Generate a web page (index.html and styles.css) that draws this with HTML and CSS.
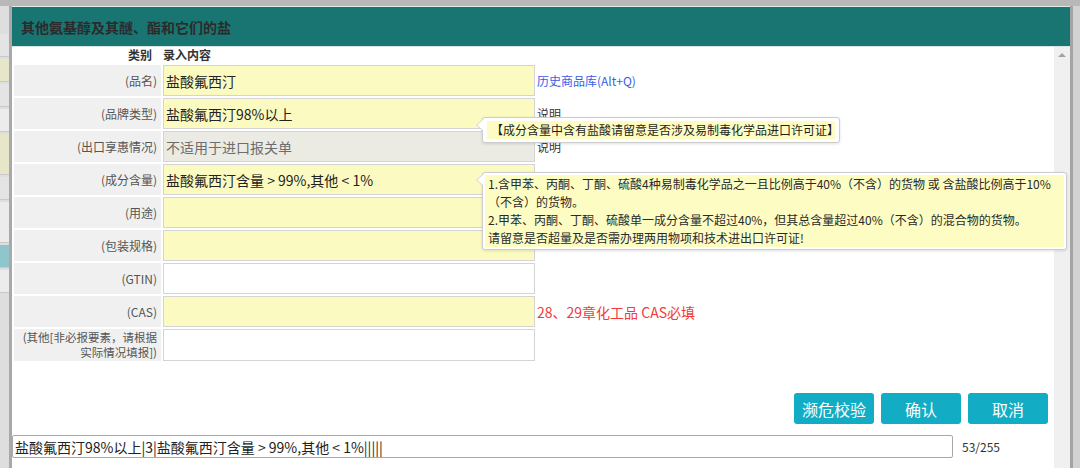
FILE: index.html
```html
<!DOCTYPE html>
<html lang="zh-CN">
<head>
<meta charset="utf-8">
<title>其他氨基醇及其醚、酯和它们的盐</title>
<link rel="stylesheet" href="styles.css">
</head>
<body>
<div class="screen">
  <div class="bg-left">
    <div class="frag f-a"></div>
    <div class="frag f-y"></div>
    <div class="frag f-a"></div>
    <div class="frag f-w"></div>
    <div class="frag f-y tall"></div>
    <div class="frag f-a"></div>
    <div class="frag f-w tall"></div>
    <div class="frag f-t"></div>
    <div class="frag f-w"></div>
  </div>
  <div class="dialog">
    <div class="dlg-head">其他氨基醇及其醚、酯和它们的盐</div>
    <div class="dlg-body">
      <div class="content">
        <div class="form">
          <div class="form-head">
            <div class="head-label">类别</div>
            <div class="head-field">录入内容</div>
          </div>
          <div class="row">
            <div class="label">(品名)</div>
            <div class="field">盐酸氟西汀</div>
            <div class="note link">历史商品库(Alt+Q)</div>
          </div>
          <div class="row">
            <div class="label">(品牌类型)</div>
            <div class="field">盐酸氟西汀98%以上</div>
            <div class="note">说明</div>
          </div>
          <div class="row">
            <div class="label">(出口享惠情况)</div>
            <div class="field grey">不适用于进口报关单</div>
            <div class="note">说明</div>
          </div>
          <div class="row">
            <div class="label">(成分含量)</div>
            <div class="field">盐酸氟西汀含量 &gt; 99%,其他 &lt; 1%</div>
            <div class="note"></div>
          </div>
          <div class="row">
            <div class="label">(用途)</div>
            <div class="field"></div>
            <div class="note"></div>
          </div>
          <div class="row">
            <div class="label">(包装规格)</div>
            <div class="field"></div>
            <div class="note"></div>
          </div>
          <div class="row">
            <div class="label">(GTIN)</div>
            <div class="field blank"></div>
            <div class="note"></div>
          </div>
          <div class="row">
            <div class="label">(CAS)</div>
            <div class="field"></div>
            <div class="note warn">28、29章化工品 CAS必填</div>
          </div>
          <div class="row row-tall">
            <div class="label multi"><span class="label-line">(其他[非必报要素，请根据</span><span class="label-line">实际情况填报])</span></div>
            <div class="field blank"></div>
            <div class="note"></div>
          </div>
        </div>

        <div class="actions">
          <button class="btn">濒危校验</button>
          <button class="btn">确认</button>
          <button class="btn">取消</button>
        </div>

        <div class="summary">
          <div class="summary-box">盐酸氟西汀98%以上|3|盐酸氟西汀含量 &gt; 99%,其他 &lt; 1%|||||</div>
          <div class="count">53/255</div>
        </div>

        <div class="tip tip-one">
          <div class="tip-inner">【成分含量中含有盐酸请留意是否涉及易制毒化学品进口许可证】</div>
        </div>
        <div class="tip tip-two">
          <div class="tip-inner">
            <div class="tip-line">1.含甲苯、丙酮、丁酮、硫酸4种易制毒化学品之一且比例高于40%（不含）的货物 或 含盐酸比例高于10%</div>
            <div class="tip-line">（不含）的货物。</div>
            <div class="tip-line">2.甲苯、丙酮、丁酮、硫酸单一成分含量不超过40%，但其总含量超过40%（不含）的混合物的货物。</div>
            <div class="tip-line">请留意是否超量及是否需办理两用物项和技术进出口许可证!</div>
          </div>
        </div>
      </div>
      <div class="scrollbar"><span class="arrow-up"></span></div>
    </div>
  </div>
  <div class="bg-right"></div>
</div>
</body>
</html>
```

FILE: styles.css
```css
html, body {
  margin: 0;
  padding: 0;
}

body {
  width: 1080px;
  height: 468px;
  overflow: hidden;
  background: #b8b8b8;
  font-family: "Noto Sans CJK SC", "Noto Sans", sans-serif;
}

.screen {
  display: flex;
  height: 462px;
  margin-top: 6px;
}

/* page behind the dialog (left edge) */
.bg-left {
  width: 9px;
  background: #dedede;
  border-right: 3px solid #a9a9a9;
  display: flex;
  flex-direction: column;
  gap: 2px;
  padding-top: 28px;
}

.frag {
  height: 22px;
  border-bottom: 1px solid #c9c9c9;
}

.frag.tall {
  height: 40px;
}

.f-a { background: #e4e4e4; }
.f-y { background: #e7e6c9; }
.f-w { background: #ececec; }
.f-t { background: #8fc6cc; }

.bg-right {
  width: 7px;
  background: #d2d2d2;
  border-left: 3px solid #a4a4a4;
}

/* dialog */
.dialog {
  width: 1058px;
  display: flex;
  flex-direction: column;
  background: #fff;
}

.dlg-head {
  height: 39px;
  border-top: 1px solid #dfe9e8;
  border-bottom: 1px solid #d6e6e5;
  background: #197572;
  display: flex;
  align-items: center;
  padding-left: 9px;
  color: #2b2b2b;
  font-size: 14px;
  font-weight: bold;
}

.dlg-body {
  flex: 1;
  display: flex;
}

.content {
  flex: 1;
  position: relative;
}

.scrollbar {
  width: 16px;
  background: #f0f0f0;
  display: flex;
  justify-content: center;
  align-items: flex-start;
  padding-top: 6px;
  box-sizing: border-box;
}

.arrow-up {
  width: 0;
  height: 0;
  border-left: 4px solid transparent;
  border-right: 4px solid transparent;
  border-bottom: 4px solid #a3a3a3;
}

/* form */
.form {
  padding-left: 2px;
  display: flex;
  flex-direction: column;
  gap: 2px;
}

.form-head,
.row {
  display: grid;
  grid-template-columns: 147px 372px 1fr;
  column-gap: 2px;
}

.form-head {
  height: 16px;
  font-size: 12px;
  font-weight: bold;
  color: #333;
  line-height: 16px;
}

.head-label {
  text-align: right;
  padding-right: 9px;
}

.row {
  height: 31px;
}

.row.row-tall {
  height: 32px;
}

.label {
  background: #f0f0f0;
  font-size: 12px;
  color: #555;
  padding-right: 4px;
  display: flex;
  align-items: center;
  justify-content: flex-end;
  text-align: right;
}

.label.multi {
  flex-direction: column;
  align-items: flex-end;
  justify-content: center;
  font-size: 11.5px;
}

.label-line {
  display: block;
  height: 15px;
  line-height: 15px;
  white-space: nowrap;
}

.field {
  box-sizing: border-box;
  border: 1px solid #d4d4d4;
  background: #fbfbc1;
  font-size: 14px;
  color: #222;
  padding-left: 2px;
  display: flex;
  align-items: center;
  white-space: nowrap;
}

.field.grey {
  background: #ebebe4;
  color: #6d6d6d;
}

.field.blank {
  background: #fff;
}

.note {
  font-size: 12px;
  color: #333;
  display: flex;
  align-items: center;
  white-space: nowrap;
}

.note.link {
  color: #3b5be8;
}

.note.warn {
  color: #f23a3a;
  font-size: 14px;
}

/* actions */
.actions {
  display: flex;
  justify-content: flex-end;
  gap: 7px;
  padding-right: 6px;
  margin-top: 32px;
}

.btn {
  width: 80px;
  height: 31px;
  border: none;
  border-radius: 3px;
  background: #12adc4;
  color: #fff;
  font-family: "Noto Sans CJK SC", "Noto Sans", sans-serif;
  font-size: 16px;
  padding: 0;
}

/* summary line */
.summary {
  display: flex;
  align-items: center;
  margin-top: 11px;
}

.summary-box {
  box-sizing: border-box;
  width: 941px;
  height: 23px;
  border: 1px solid #a8a8a8;
  border-radius: 2px;
  font-size: 14px;
  color: #222;
  padding-left: 2px;
  display: flex;
  align-items: center;
  white-space: nowrap;
}

.count {
  margin-left: 9px;
  font-size: 12px;
  color: #333;
}

/* tooltips */
.tip {
  position: absolute;
  left: 470px;
  background: #fff;
  border: 1px solid #cdcdcd;
  border-radius: 3px;
  box-shadow: 0 1px 3px rgba(0, 0, 0, 0.12);
}

.tip::before,
.tip::after {
  content: "";
  position: absolute;
  width: 0;
  height: 0;
  border-top: 6px solid transparent;
  border-bottom: 6px solid transparent;
}

.tip::before {
  left: -7px;
  top: 1px;
  border-right: 7px solid #cdcdcd;
}

.tip::after {
  left: -6px;
  top: 1px;
  border-right: 7px solid #fff;
}

.tip-inner {
  background: #fdfdc3;
  font-size: 12px;
  line-height: 18px;
  color: #1e1e1e;
}

.tip-one {
  top: 70px;
  width: 348px;
  padding: 3px 4px;
}

.tip-one .tip-inner {
  padding-left: 4px;
  white-space: nowrap;
}

.tip-two {
  top: 125px;
  width: 579px;
  padding: 2px 2px;
}

.tip-two .tip-inner {
  padding-left: 3px;
  color: #2a2a2a;
}

.tip-line {
  white-space: nowrap;
}
```
